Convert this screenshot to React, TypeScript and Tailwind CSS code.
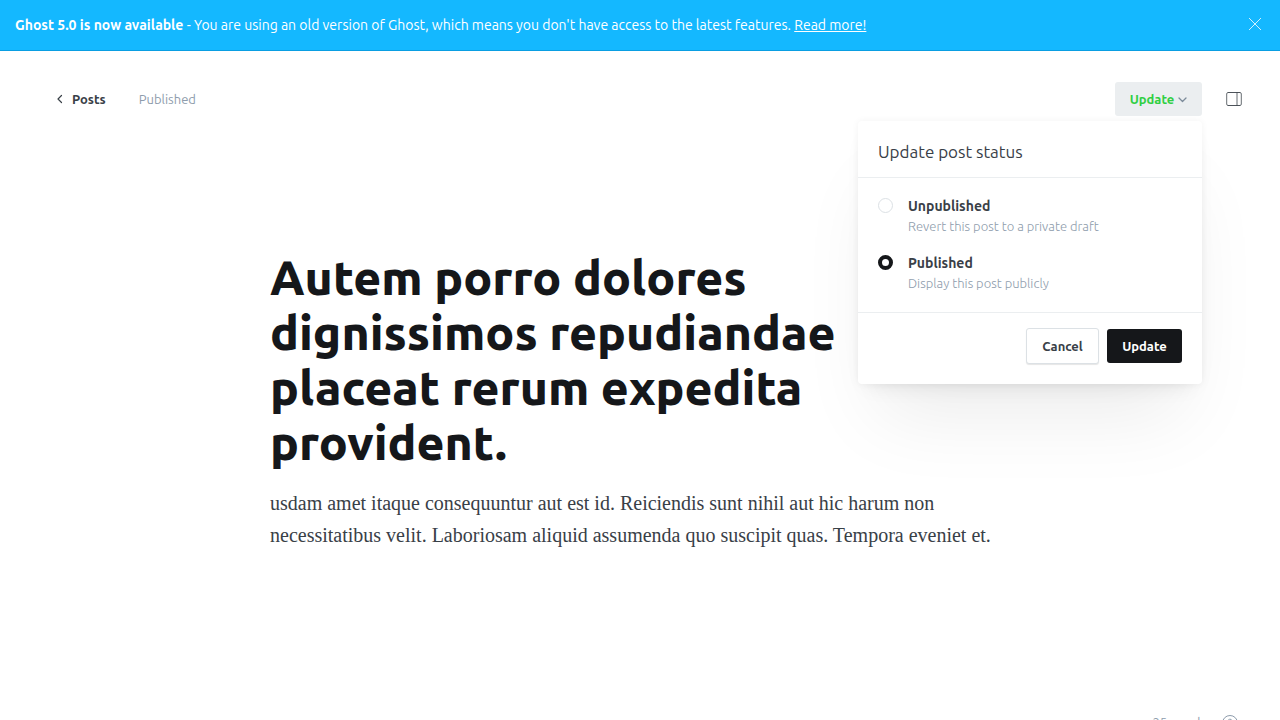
import { useState } from "react";

const options = [
  { id: "unpublished", title: "Unpublished", note: "Revert this post to a private draft" },
  { id: "published", title: "Published", note: "Display this post publicly" },
];

function Banner() {
  return (
    <aside className="flex h-[51px] shrink-0 items-center justify-between border-b border-[#0a9ee2] bg-[#14b8ff] pr-[18px] pl-[15px] text-sm text-white">
      <p className="whitespace-nowrap">
        <strong className="font-bold">Ghost 5.0 is now available</strong> - You are using an old version of Ghost, which
        means you don't have access to the latest features.{" "}
        <a href="#read-more" className="underline">
          Read more!
        </a>
      </p>
      <button type="button" aria-label="Close" className="pb-[3px]">
        <svg viewBox="0 0 14 14" className="size-[14px]" fill="none" stroke="currentColor" strokeWidth="0.8">
          <path d="M1 1l12 12M13 1L1 13" />
        </svg>
      </button>
    </aside>
  );
}

function StatusMenu() {
  const [status, setStatus] = useState("published");
  return (
    <form className="absolute top-[39px] right-0 z-10 w-[344px] rounded bg-white text-[#394047] shadow-[0_0_7px_rgba(0,0,0,0.05),0_10px_20px_-10px_rgba(0,0,0,0.1),0_50px_80px_-20px_rgba(0,0,0,0.08)]">
      <h2 className="flex h-14 items-center px-5 pt-[6px] text-[17px]">Update post status</h2>
      <fieldset className="flex flex-col gap-4 border-y border-[#ebeef0] px-5 py-[18px]">
        {options.map((option) => (
          <label key={option.id} className="flex gap-[15px]">
            <input
              type="radio"
              name="status"
              checked={status === option.id}
              onChange={() => setStatus(option.id)}
              className="mt-[2px] size-[15px] shrink-0 appearance-none rounded-full border border-[#dce1e5] bg-white checked:border-4 checked:border-[#15171a]"
            />
            <span className="flex flex-col">
              <span className="text-sm font-semibold">{option.title}</span>
              <span className="text-[13px] leading-[21px] font-light text-[#8e9cac]">{option.note}</span>
            </span>
          </label>
        ))}
      </fieldset>
      <div className="flex items-center justify-end gap-2 px-5 pt-[15px] pb-5 text-[13px] font-semibold">
        <button
          type="button"
          className="h-9 w-[73px] rounded-[3px] border border-[#dce1e5] bg-white shadow-[0_1px_1px_rgba(0,0,0,0.1)]"
        >
          Cancel
        </button>
        <button type="button" className="h-[34px] w-[75px] rounded-[3px] bg-[#15171a] text-white">
          Update
        </button>
      </div>
    </form>
  );
}

function Header() {
  return (
    <header className="flex items-center justify-between pt-[31px] pr-[38px] pl-14 text-[13px] leading-5">
      <nav className="flex items-center gap-[33px]">
        <a href="#posts" className="flex items-center gap-2 font-semibold text-[#394047]">
          <svg viewBox="0 0 8 10" className="h-[10px] w-2" fill="none" stroke="currentColor" strokeWidth="1.2">
            <path d="M5.5 1.5L2 5l3.500 3.500" strokeLinecap="round" strokeLinejoin="round" />
          </svg>
          Posts
        </a>
        <span className="text-[#8e9cac]">Published</span>
      </nav>
      <div className="flex items-center gap-6">
        <div className="relative">
          <button
            type="button"
            className="flex h-[34px] w-[87px] items-center justify-center gap-1 rounded-[3px] bg-[#ebeef0] font-semibold text-[#30cf43]"
          >
            Update
            <svg viewBox="0 0 9 6" className="mt-[2px] h-[6px] w-[9px]" fill="none" stroke="#7c8b9a" strokeWidth="1.3">
              <path d="M1 1l3.500 3.500L8 1" strokeLinecap="round" strokeLinejoin="round" />
            </svg>
          </button>
          <StatusMenu />
        </div>
        <button type="button" aria-label="Settings">
          <svg viewBox="0 0 16 14" className="h-[14px] w-4" fill="none" stroke="#394047" strokeWidth="0.9">
            <path d="M2 0.5h12M2 13.5h12" />
            <path d="M2 .5Q.7.5.7 2v10q0 1.500 1.300 1.500M14 .5q1.300 0 1.300 1.500v10q0 1.500-1.300 1.500M11 .5v13" strokeOpacity="0.85" />
          </svg>
        </button>
      </div>
    </header>
  );
}

export default function App() {
  return (
    <div className="h-screen overflow-hidden bg-white font-['Ubuntu','Noto_Sans',sans-serif]">
      <Banner />
      <div className="flex h-screen flex-col">
        <Header />
        <main className="mx-auto w-full max-w-[740px] flex-1 pt-[134px]">
          <h1 className="pr-8 text-5xl leading-[55px] font-extrabold text-[#15171a]">
            Autem porro dolores dignissimos repudiandae placeat rerum expedita provident.
          </h1>
          <p className="pt-[17px] font-['Liberation_Serif',serif] text-xl leading-8 text-[#394047]">
            usdam amet itaque consequuntur aut est id. Reiciendis sunt nihil aut hic harum non necessitatibus velit.
            Laboriosam aliquid assumenda quo suscipit quas. Tempora eveniet et.
          </p>
        </main>
        <footer className="flex items-center justify-end gap-4 pr-[42px] pb-[39px] text-[13px] leading-4 text-[#8e9cac]">
          <span className="pb-0.5">25 words</span>
          <a href="#help" aria-label="Help">
            <svg viewBox="0 0 16 16" className="size-4" fill="none" stroke="currentColor">
              <circle cx="8" cy="8" r="7.500" />
              <path d="M6 6.200a2 2 0 1 1 2.800 1.800c-.6.300-.8.600-.8 1.200M8 11v1" />
            </svg>
          </a>
        </footer>
      </div>
    </div>
  );
}
